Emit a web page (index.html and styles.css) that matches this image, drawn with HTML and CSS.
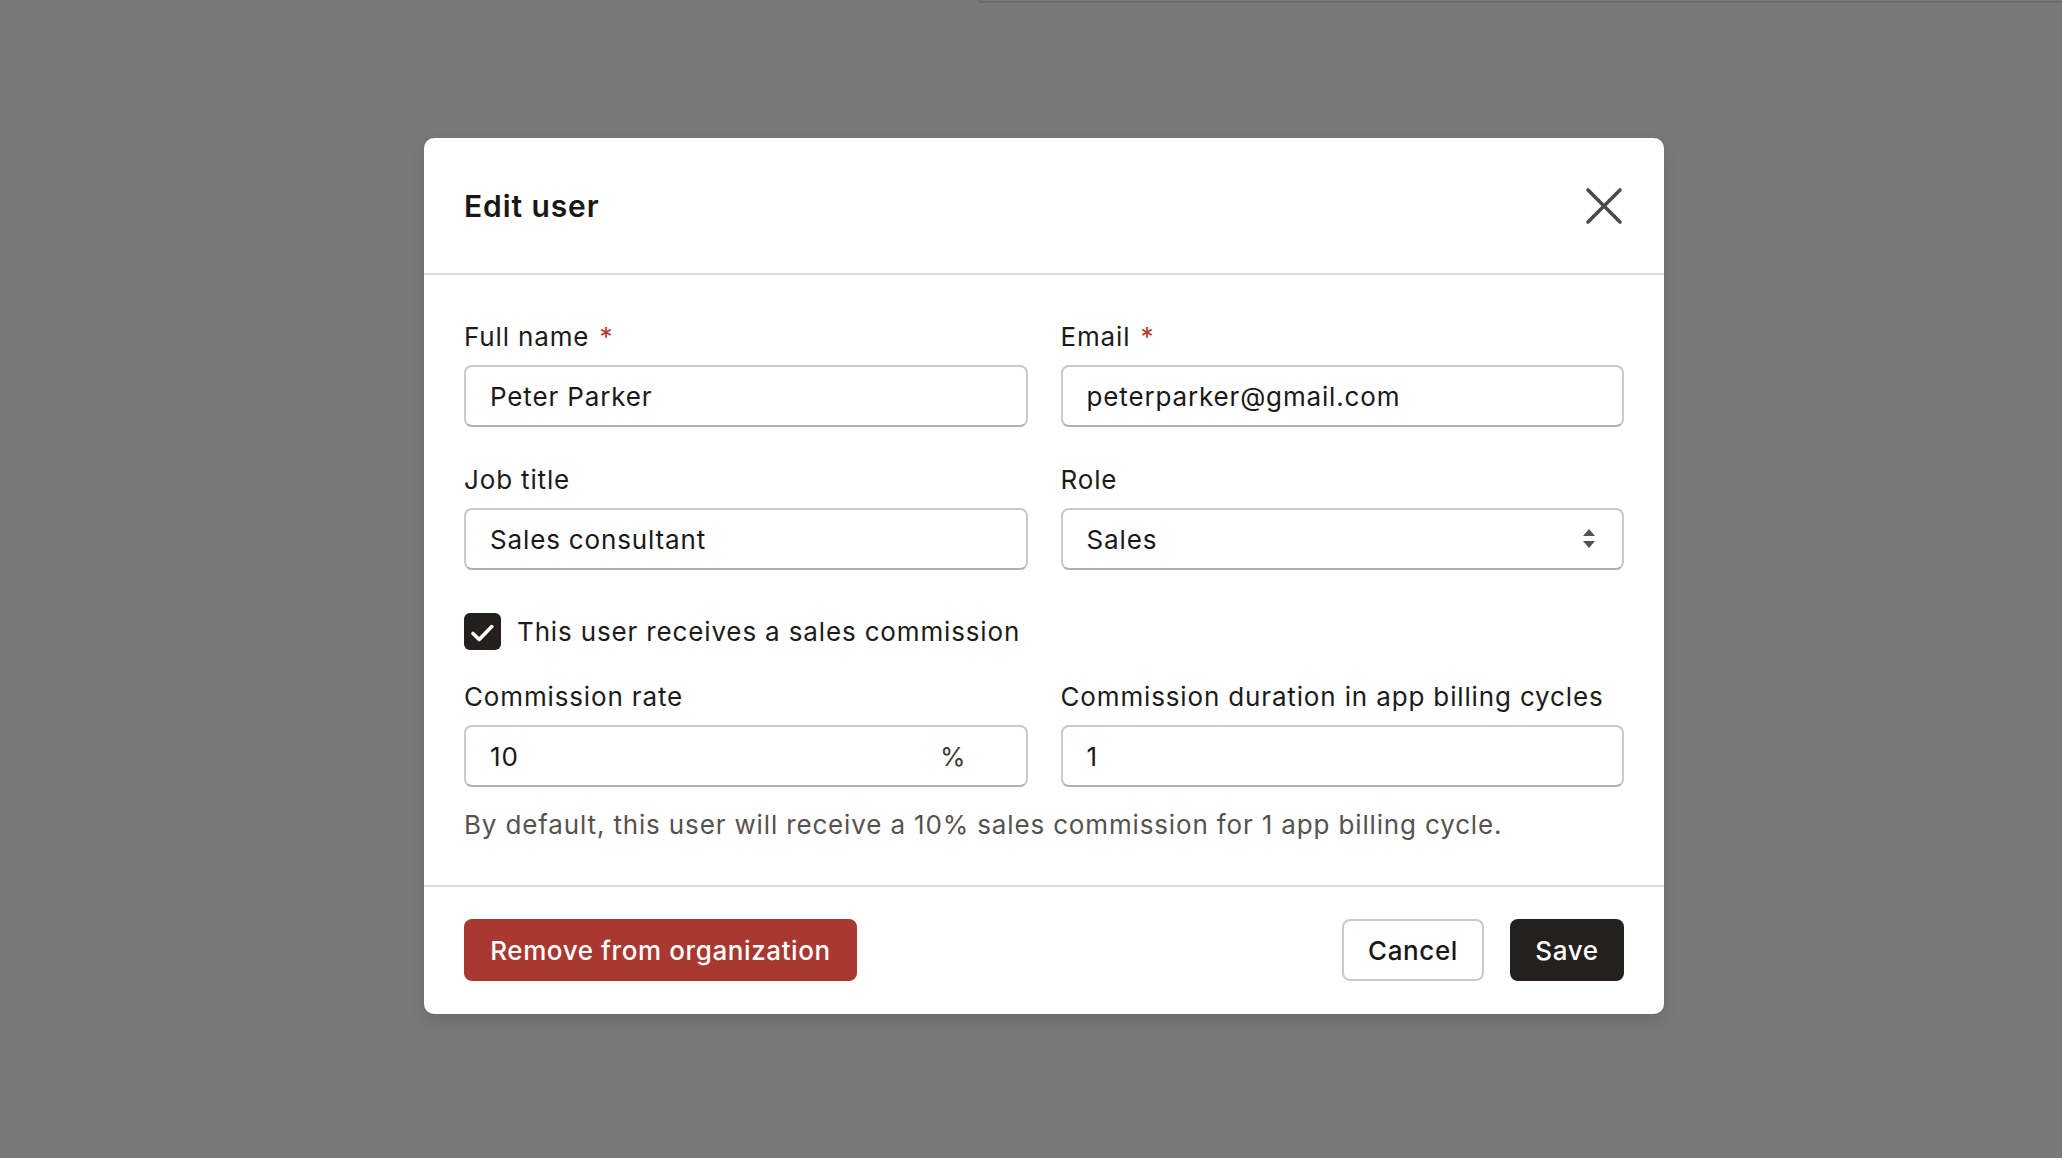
FILE: index.html
```html
<!DOCTYPE html>
<html lang="en">
<head>
<meta charset="utf-8">
<title>Edit user</title>
<link rel="stylesheet" href="styles.css">
</head>
<body>
<div class="backdrop-card"></div>
<div class="modal">
  <header class="modal-header">
    <h2 class="modal-title">Edit user</h2>
    <button class="close-btn" aria-label="Close">
      <svg width="40" height="40" viewBox="0 0 40 40"><path d="M4 4 L36 36 M36 4 L4 36" stroke="#4b4a49" stroke-width="3.6" stroke-linecap="round" fill="none"/></svg>
    </button>
  </header>
  <div class="modal-body">
    <div class="grid">
      <div class="field">
        <label class="label">Full name <span class="req">*</span></label>
        <div class="input">Peter Parker</div>
      </div>
      <div class="field">
        <label class="label">Email <span class="req">*</span></label>
        <div class="input">peterparker@gmail.com</div>
      </div>
    </div>
    <div class="grid row2">
      <div class="field">
        <label class="label">Job title</label>
        <div class="input">Sales consultant</div>
      </div>
      <div class="field">
        <label class="label">Role</label>
        <div class="input select"><span>Sales</span>
          <svg class="chev" width="12" height="20" viewBox="0 0 12 20"><path d="M0 7 L6 0 L12 7 Z M0 12 L6 19 L12 12 Z" fill="#555351"/></svg>
        </div>
      </div>
    </div>
    <div class="check-row">
      <svg class="checkbox" width="37" height="37" viewBox="0 0 37 37"><rect x="0" y="0" width="37" height="37" rx="6" fill="#231f1c"/><path d="M9 20.5 L15.2 26.5 L27.8 13.6" stroke="#fff" stroke-width="3.6" stroke-linecap="round" stroke-linejoin="round" fill="none"/></svg>
      <span class="check-label">This user receives a sales commission</span>
    </div>
    <div class="grid row3">
      <div class="field">
        <label class="label">Commission rate</label>
        <div class="input suffixed"><span>10</span><span class="suffix">%</span></div>
      </div>
      <div class="field">
        <label class="label">Commission duration in app billing cycles</label>
        <div class="input">1</div>
      </div>
    </div>
    <p class="help">By default, this user will receive a 10% sales commission for 1 app billing cycle.</p>
  </div>
  <footer class="modal-footer">
    <button class="btn btn-danger">Remove from organization</button>
    <div class="actions">
      <button class="btn btn-secondary">Cancel</button>
      <button class="btn btn-primary">Save</button>
    </div>
  </footer>
</div>
</body>
</html>
```
FILE: styles.css
```css
* { box-sizing: border-box; }
html, body { margin: 0; padding: 0; }
body {
  background: #797979;
  width: 2062px;
  height: 1158px;
  overflow: hidden;
  font-family: "Inter", "Noto Sans", "Liberation Sans", sans-serif;
  color: #1d1b1a;
  letter-spacing: 0.85px;
}
.backdrop-card {
  margin-left: 978px;
  height: 3px;
  border-bottom: 2px solid #6c6c6c;
  border-left: 2px solid #6c6c6c;
  border-bottom-left-radius: 4px;
  background: #787878;
}
.modal {
  margin: 135px 0 0 424px;
  width: 1240px;
  background: #fff;
  border-radius: 10px;
  box-shadow: 0 6px 16px rgba(0,0,0,0.12);
}
.modal-header {
  height: 137px;
  padding: 0 40px;
  border-bottom: 2px solid #dedcdb;
  display: flex;
  align-items: center;
  justify-content: space-between;
}
.modal-title {
  margin: 0;
  font-size: 30px;
  font-weight: 600;
  color: #1a1817;
  letter-spacing: 0.9px;
}
.close-btn {
  background: none;
  border: 0;
  padding: 0;
  width: 40px;
  height: 40px;
  display: flex;
}
.modal-body {
  padding: 44px 40px 42px;
}
.grid {
  display: grid;
  grid-template-columns: 1fr 1fr;
  column-gap: 33px;
}
.row2 { margin-top: 35px; }
.row3 { margin-top: 29px; }
.label {
  display: block;
  font-size: 26px;
  line-height: 36px;
  height: 36px;
  margin-bottom: 10px;
  color: #1d1b1a;
}
.req { color: #b6372a; margin-left: 2px; }
.input {
  height: 62px;
  border: 2px solid #cbc8c6;
  border-bottom-color: #b3afac;
  border-radius: 8px;
  padding: 0 24px;
  display: flex;
  align-items: center;
  font-size: 26px;
  color: #1a1817;
  background: #fff;
}
.select { justify-content: space-between; padding-right: 27px; }
.suffixed { justify-content: space-between; padding-right: 59px; }
.suffix { color: #3f3c3a; }
.check-row {
  margin-top: 43px;
  display: flex;
  align-items: center;
  height: 37px;
  gap: 16px;
}
.checkbox { flex: none; }
.check-label {
  font-size: 26px;
  color: #1d1b1a;
}
.help {
  margin: 20px 0 0;
  font-size: 26px;
  line-height: 36px;
  color: #57524f;
}
.modal-footer {
  border-top: 2px solid #dedcdb;
  padding: 32px 40px 33px;
  display: flex;
  justify-content: space-between;
  align-items: center;
}
.actions { display: flex; gap: 26px; }
.btn {
  height: 62px;
  border-radius: 8px;
  font-family: inherit;
  font-size: 26px;
  font-weight: 500;
  letter-spacing: 0.6px;
  padding: 0 20px;
  border: 2px solid transparent;
  cursor: pointer;
}
.btn-danger { background: #a83830; color: #fff; width: 393px; }
.btn-secondary { background: #fff; border-color: #cdc9c5; color: #1a1817; width: 142px; }
.btn-primary { background: #24201d; color: #fff; width: 114px; }
```
